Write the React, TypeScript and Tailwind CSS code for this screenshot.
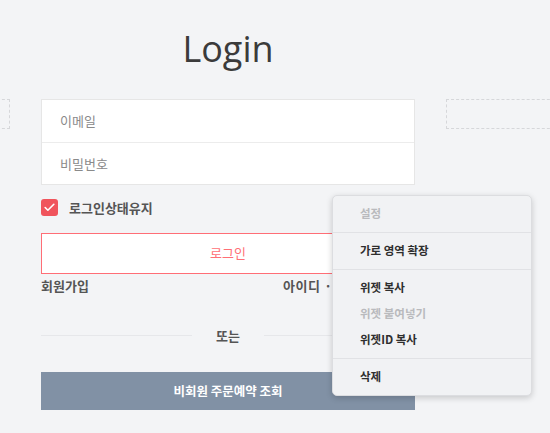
import { Check } from 'lucide-react';

const kr = "font-['Noto_Sans_CJK_KR','Noto_Sans',sans-serif]";

const MENU = [
    [{ label: '설정', disabled: true }],
    [{ label: '가로 영역 확장' }],
    [{ label: '위젯 복사' }, { label: '위젯 붙여넣기', disabled: true }, { label: '위젯ID 복사' }],
    [{ label: '삭제' }],
];

function ContextMenu() {
    return (
        <div className={`absolute left-[332px] top-[195px] w-[200px] rounded-[5px] border border-[#dcdde0] bg-[#f1f2f4] shadow-[0_2px_6px_rgba(0,0,0,0.18)] ${kr}`}>
            {MENU.map((group, gi) => (
                <div key={gi} className={`py-[5px] ${gi > 0 ? 'border-t border-[#e1e2e5]' : ''}`}>
                    {group.map((item) => (
                        <div
                            key={item.label}
                            className={`flex h-[26px] items-center pl-[27px] text-[11.5px] font-bold ${item.disabled ? 'text-[#b9babd]' : 'text-[#2e2e2e]'}`}
                        >
                            {item.label}
                        </div>
                    ))}
                </div>
            ))}
        </div>
    );
}

export default function App() {
    return (
        <div className="relative h-[433px] w-[550px] overflow-hidden bg-[#f3f4f6]">
            <div className="flex items-start gap-[31px] pt-[26px]">
                {/* left placeholder column */}
                <div className="-ml-[90px] mt-[73px] h-[30px] w-[100px] shrink-0 border border-dashed border-[#d6d7da]" />

                {/* login form */}
                <div className="flex w-[374px] shrink-0 flex-col">
                    <h1 className="text-center font-['Open_Sans',sans-serif] text-[36px] leading-[46px] text-[#3b3b3b]">
                        Login
                    </h1>

                    <div className={`mt-[27px] border border-[#e6e6e6] bg-white ${kr}`}>
                        <div className="flex h-[42px] items-center pl-[18px] text-[13px] text-[#8a8a8a]">이메일</div>
                        <div className="flex h-[42px] items-center border-t border-[#ececec] pl-[18px] text-[13px] text-[#8a8a8a]">
                            비밀번호
                        </div>
                    </div>

                    <label className={`mt-[13px] flex items-center gap-[11px] ${kr}`}>
                        <span className="flex h-[17px] w-[17px] items-center justify-center rounded-[3px] bg-[#f0545c]">
                            <Check size={13} strokeWidth={3} className="text-white" />
                        </span>
                        <span className="text-[13px] font-semibold text-[#555]">로그인상태유지</span>
                    </label>

                    <div className="mt-[15px] bg-[#ff6e76] p-px">
                        <div className={`flex h-[39px] items-center justify-center bg-white text-[13px] text-[#ff6f76] ${kr}`}>
                            로그인
                        </div>
                    </div>

                    <div className={`flex h-[24px] items-center justify-between text-[13px] font-semibold text-[#555] ${kr}`}>
                        <span>회원가입</span>
                        <span className="tracking-[0.6px]">아이디 · 비밀번호 찾기</span>
                    </div>

                    <div className={`mt-[28px] flex items-center gap-[24px] ${kr}`}>
                        <div className="h-px flex-1 bg-[#e6e7ea]" />
                        <span className="text-[13px] font-semibold text-[#555]">또는</span>
                        <div className="h-px flex-1 bg-[#e6e7ea]" />
                    </div>

                    <div className={`mt-[27px] flex h-[38px] items-center justify-center bg-[#8191a5] text-[12.5px] font-bold text-white ${kr}`}>
                        비회원 주문예약 조회
                    </div>
                </div>

                {/* right placeholder column */}
                <div className="-mr-[20px] mt-[73px] h-[30px] flex-1 border border-dashed border-[#d6d7da]" />
            </div>

            <ContextMenu />
        </div>
    );
}
